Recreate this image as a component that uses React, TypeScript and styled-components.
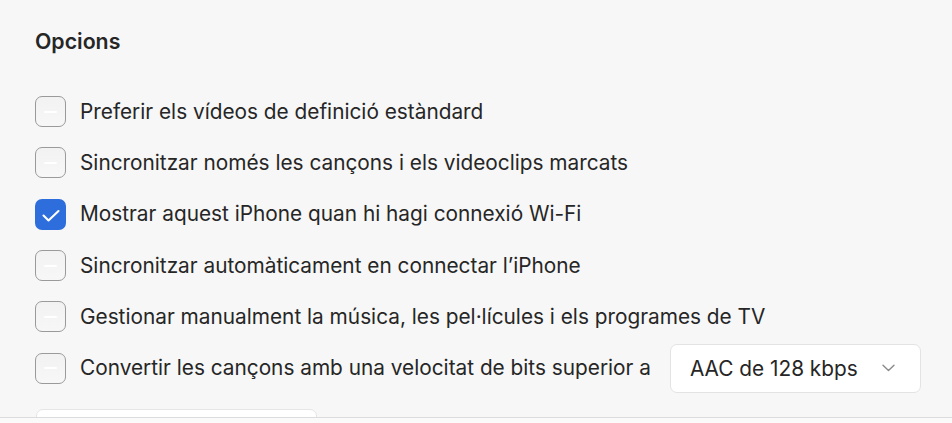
import styled, {createGlobalStyle} from 'styled-components';

const GlobalStyle = createGlobalStyle`
  html, body {
    margin: 0;
    padding: 0;
    background: #f7f7f7;
  }
  body {
    font-family: Inter, "Noto Sans", "Liberation Sans", sans-serif;
    color: #262626;
    -webkit-font-smoothing: antialiased;
  }
`;

type Option = {
  label: string;
  checked?: boolean;
  withSelect?: boolean;
}

const options: Option[] = [
  {label: 'Preferir els vídeos de definició estàndard'},
  {label: 'Sincronitzar només les cançons i els videoclips marcats'},
  {label: 'Mostrar aquest iPhone quan hi hagi connexió Wi-Fi', checked: true},
  {label: 'Sincronitzar automàticament en connectar l’iPhone'},
  {label: 'Gestionar manualment la música, les pel·lícules i els programes de TV'},
  {label: 'Convertir les cançons amb una velocitat de bits superior a', withSelect: true},
];

function CheckMark() {
  return (
    <svg width="31" height="31" viewBox="0 0 31 31" fill="none">
      <path d="M8.5 16.5 L13.5 21.5 L23.5 12" stroke="#fff" strokeWidth="2.1" strokeLinecap="round" strokeLinejoin="round"/>
    </svg>
  );
}

function Chevron() {
  return (
    <svg width="13" height="8" viewBox="0 0 13 8" fill="none">
      <path d="M1 1.2 L6.5 6.5 L12 1.2" stroke="#8a8a8a" strokeWidth="1.4" strokeLinecap="round" strokeLinejoin="round"/>
    </svg>
  );
}

export default function App() {
  return (
    <>
      <GlobalStyle/>
      <Page>
        <Panel>
          <Title>Opcions</Title>
          <List>
            {options.map((o) => (
              <Row key={o.label}>
                <Box $checked={!!o.checked}>
                  {o.checked ? <CheckMark/> : <Dash/>}
                </Box>
                <Label>{o.label}</Label>
                {o.withSelect && (
                  <Select>
                    <span>AAC de 128 kbps</span>
                    <Chevron/>
                  </Select>
                )}
              </Row>
            ))}
          </List>
          <NextCard/>
        </Panel>
        <Footer/>
      </Page>
    </>
  );
}

const Page = styled.div`
  width: 952px;
  height: 423px;
  display: flex;
  flex-direction: column;
  overflow: hidden;
`;

const Panel = styled.div`
  height: 417px;
  flex-shrink: 0;
  overflow: hidden;
  border-bottom: 1px solid #dcdcdc;
  padding: 0 35px;
  display: flex;
  flex-direction: column;
`;

const Title = styled.h2`
  margin: 0;
  padding-top: 29px;
  font-size: 21.3px;
  line-height: 24px;
  font-weight: 600;
  color: #262626;
`;

const List = styled.div`
  margin-top: 33px;
  display: flex;
  flex-direction: column;
`;

const Row = styled.div`
  height: 51.3px;
  display: flex;
  align-items: center;
  flex-shrink: 0;
`;

const Box = styled.div<{$checked: boolean}>`
  width: 31px;
  height: 31px;
  box-sizing: border-box;
  border-radius: 7px;
  flex-shrink: 0;
  display: flex;
  align-items: center;
  justify-content: center;
  overflow: hidden;
  border: ${({$checked}) => $checked ? 'none' : '1.5px solid #9a9a9a'};
  background: ${({$checked}) => $checked ? '#2d6ddc' : 'linear-gradient(#f2f2f2, #f7f7f7)'};
`;

const Dash = styled.div`
  width: 13px;
  height: 2px;
  border-radius: 1px;
  background: #ffffff;
`;

const Label = styled.span`
  margin-left: 14px;
  font-size: 20.8px;
  line-height: 24px;
  color: #262626;
  white-space: nowrap;
`;

const Select = styled.div`
  margin-left: 19px;
  width: 251px;
  height: 49px;
  box-sizing: border-box;
  flex-shrink: 0;
  display: flex;
  align-items: center;
  justify-content: space-between;
  padding: 0 25px 0 19px;
  background: #ffffff;
  border: 1px solid #e3e3e3;
  border-radius: 7px;
  font-size: 20.8px;
  color: #262626;
`;

const NextCard = styled.div`
  margin-top: 15px;
  margin-left: 1px;
  width: 279px;
  height: 40px;
  flex-shrink: 0;
  background: #ffffff;
  border: 1px solid #e6e6e6;
  border-radius: 7px;
`;

const Footer = styled.div`
  flex: 1;
  background: #fafafa;
`;
